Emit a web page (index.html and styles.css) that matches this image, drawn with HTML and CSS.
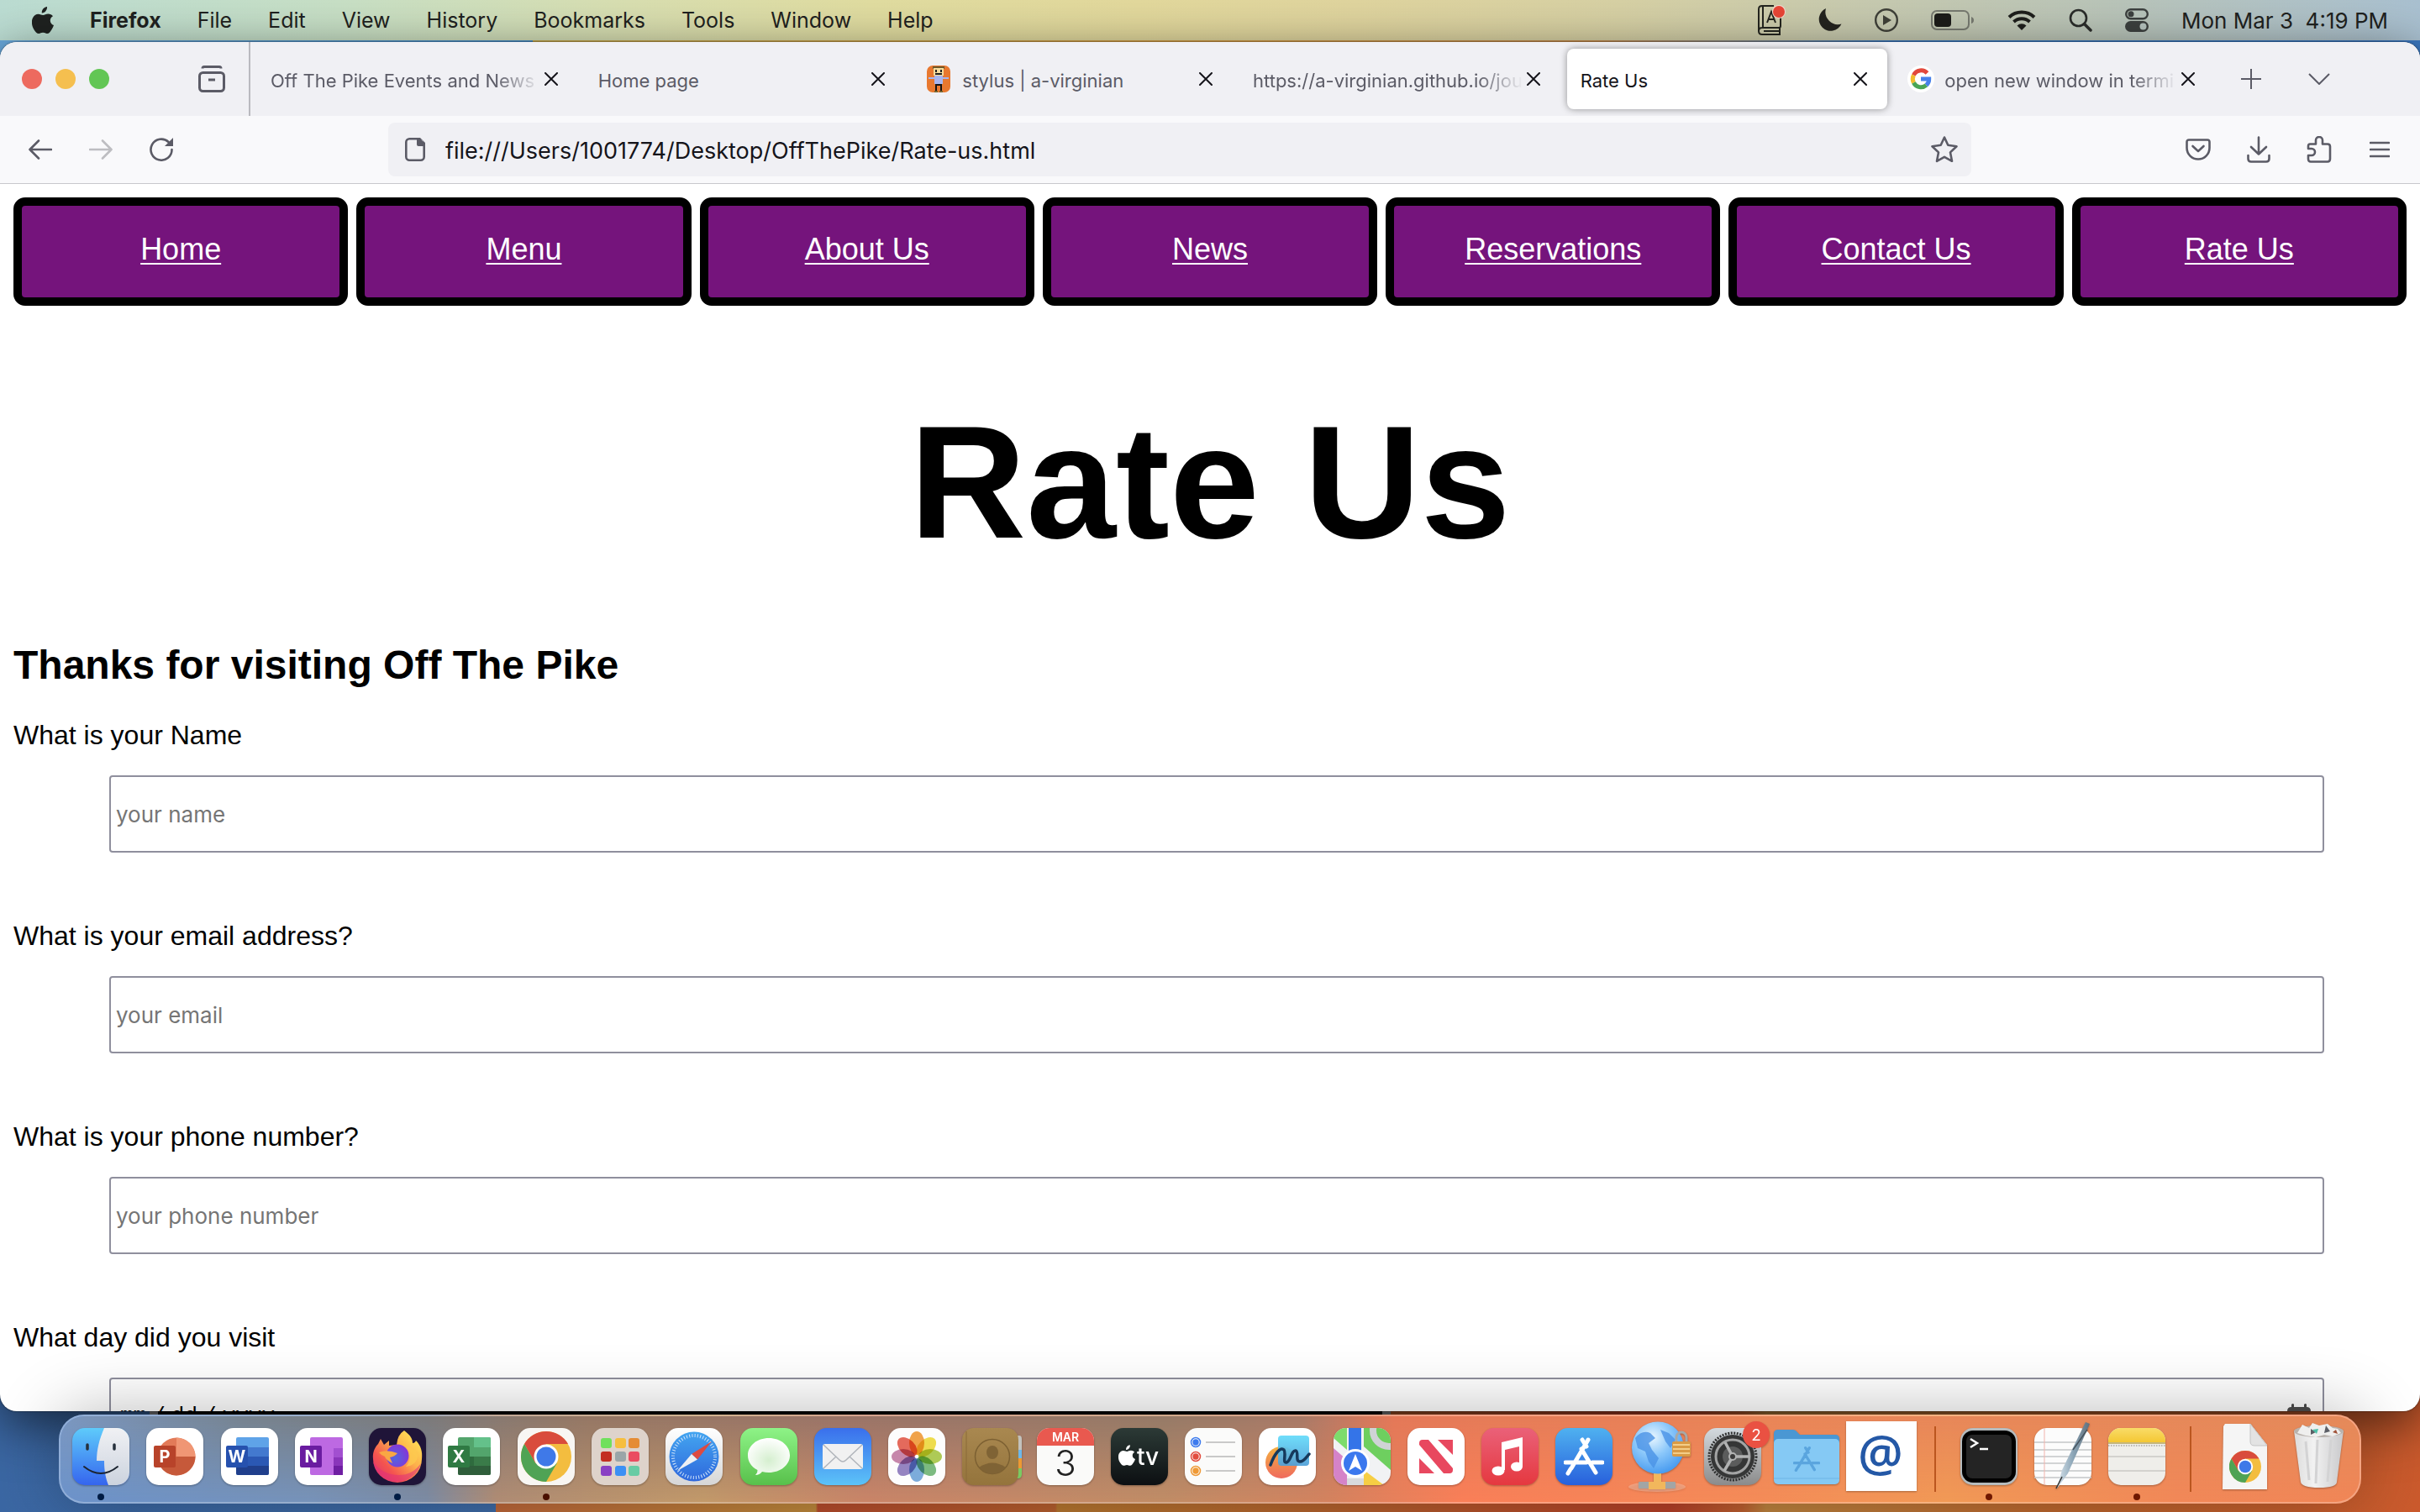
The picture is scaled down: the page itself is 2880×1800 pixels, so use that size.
FILE: index.html
```html
<!DOCTYPE html>
<html lang="en">
<head>
<meta charset="utf-8">
<title>Rate Us</title>
<link rel="stylesheet" href="styles.css">
</head>
<body>
<svg class="defs" aria-hidden="true">
  <defs>
    <linearGradient id="g-blue" x1="0" y1="0" x2="0" y2="1"><stop offset="0" stop-color="#5ecbfb"/><stop offset="1" stop-color="#3565ee"/></linearGradient>
    <linearGradient id="g-face" x1="0" y1="0" x2="0" y2="1"><stop offset="0" stop-color="#f0f1f4"/><stop offset="1" stop-color="#ccd3de"/></linearGradient>
    <linearGradient id="g-green" x1="0" y1="0" x2="0" y2="1"><stop offset="0" stop-color="#8ef387"/><stop offset="1" stop-color="#58c04b"/></linearGradient>
    <linearGradient id="g-mail" x1="0" y1="0" x2="0" y2="1"><stop offset="0" stop-color="#3a6fec"/><stop offset="1" stop-color="#5cc3f8"/></linearGradient>
    <linearGradient id="g-store" x1="0" y1="0" x2="0" y2="1"><stop offset="0" stop-color="#4fb1f0"/><stop offset="1" stop-color="#2860dc"/></linearGradient>
    <linearGradient id="g-white" x1="0" y1="0" x2="0" y2="1"><stop offset="0" stop-color="#ffffff"/><stop offset="1" stop-color="#d6d6d6"/></linearGradient>
    <linearGradient id="g-safari" x1="0" y1="0" x2="0" y2="1"><stop offset="0" stop-color="#43a5f0"/><stop offset="1" stop-color="#2f68dc"/></linearGradient>
    <linearGradient id="g-music" x1="0" y1="0" x2="0" y2="1"><stop offset="0" stop-color="#ea6179"/><stop offset="1" stop-color="#e5383f"/></linearGradient>
    <linearGradient id="g-tv" x1="0" y1="0" x2="0" y2="1"><stop offset="0" stop-color="#2c3a36"/><stop offset="1" stop-color="#0c0f12"/></linearGradient>
    <linearGradient id="g-book" x1="0" y1="0" x2="0" y2="1"><stop offset="0" stop-color="#a98850"/><stop offset="1" stop-color="#94743c"/></linearGradient>
    <linearGradient id="g-free" x1="0" y1="0" x2="0" y2="1"><stop offset="0" stop-color="#f4b13f"/><stop offset="1" stop-color="#ef6a5e"/></linearGradient>
    <linearGradient id="g-freesq" x1="0" y1="0" x2="0" y2="1"><stop offset="0" stop-color="#64dbfa"/><stop offset="1" stop-color="#4f9fd8"/></linearGradient>
    <linearGradient id="g-fox" x1="1" y1="0" x2="0" y2="1"><stop offset="0" stop-color="#fff25a"/><stop offset=".4" stop-color="#fdb04b"/><stop offset=".7" stop-color="#f4544f"/><stop offset="1" stop-color="#d92a78"/></linearGradient>
    <linearGradient id="g-set" x1="0" y1="0" x2="0" y2="1"><stop offset="0" stop-color="#d3dadf"/><stop offset="1" stop-color="#8b8b8b"/></linearGradient>
    <linearGradient id="g-note" x1="0" y1="0" x2="0" y2="1"><stop offset="0" stop-color="#f9dc68"/><stop offset="1" stop-color="#f4c733"/></linearGradient>
    <linearGradient id="g-bin" x1="0" y1="0" x2="1" y2="0"><stop offset="0" stop-color="#dcdcdc"/><stop offset=".4" stop-color="#f2f2f2"/><stop offset="1" stop-color="#c9c9cb"/></linearGradient>
    <linearGradient id="g-pen" x1="0" y1="0" x2="1" y2="0"><stop offset="0" stop-color="#d8e4ec"/><stop offset=".5" stop-color="#8aa4b6"/><stop offset="1" stop-color="#5f6f7c"/></linearGradient>
    <radialGradient id="g-globe" cx=".4" cy=".3" r=".7"><stop offset="0" stop-color="#e8f6ff"/><stop offset=".5" stop-color="#8cc8fa"/><stop offset="1" stop-color="#4b9df0"/></radialGradient>
    <radialGradient id="g-bubble" cx=".5" cy=".6" r=".6"><stop offset="0" stop-color="#d5efcf"/><stop offset="1" stop-color="#ffffff"/></radialGradient>
    <radialGradient id="g-orb" cx=".4" cy=".6" r=".7"><stop offset="0" stop-color="#5266e0"/><stop offset="1" stop-color="#8a2fd6"/></radialGradient>
    <clipPath id="tile"><rect width="68" height="68" rx="15"/></clipPath>
    <symbol id="chrome" viewBox="0 0 60 60">
      <circle cx="30" cy="30" r="30" fill="#f3bd3f"/>
      <path d="M30 0A30 30 0 0 1 56 15H30L17 37.500 4 15A30 30 0 0 1 30 0Z" fill="#d94c3c"/>
      <path d="M4 15A30 30 0 0 0 30 60L43 37.500 30 44 17 37.500Z" fill="#4fa355"/>
      <circle cx="30" cy="30" r="14.500" fill="#fff"/><circle cx="30" cy="30" r="11.500" fill="#3f79e8"/>
    </symbol>
    <symbol id="apple" viewBox="0 0 26 32">
      <path d="M18 0c.3 2-.6 4-1.700 5.300C15.200 6.700 13.500 7.700 11.800 7.500c-.3-1.900.6-3.900 1.700-5.200C14.600 1 16.500.1 18 0ZM25 11.200c-2.200 1.300-3.200 3-3.200 5.200 0 2.600 1.500 4.500 4.200 5.600-.6 1.900-1.500 3.700-2.700 5.500C21.700 30 20.400 32 18 32c-1.900 0-2.600-1.200-4.900-1.200S10 32 8.200 32c-2.300 0-4-2.200-5.600-4.600C-.1 23.300-1 17.500.9 13.400 2.200 10.600 4.900 8.700 7.600 8.700c2.300 0 3.900 1.300 5.700 1.300 1.700 0 3.300-1.400 6.100-1.400 2.200 0 4.300 1 5.600 2.600Z"/>
    </symbol>
    <symbol id="x" viewBox="0 0 16 16"><path d="M1 1 15 15M15 1 1 15" fill="none" stroke="#15141a" stroke-width="2" stroke-linecap="round"/></symbol>
    <symbol id="store" viewBox="0 0 48 48"><path d="M22 4 27 12M29 4 9 38M21 15 38 43M2 31H27M34 31H46M8 39 5 44" fill="none" stroke="currentColor" stroke-width="5" stroke-linecap="round"/></symbol>
  </defs>
</svg>

<header class="menubar">
  <nav class="menus" aria-label="Menu bar">
    <svg class="apple" width="26" height="32"><use href="#apple"/></svg>
    <button class="menu menu-app">Firefox</button>
    <button class="menu">File</button>
    <button class="menu">Edit</button>
    <button class="menu">View</button>
    <button class="menu">History</button>
    <button class="menu">Bookmarks</button>
    <button class="menu">Tools</button>
    <button class="menu">Window</button>
    <button class="menu">Help</button>
  </nav>
  <div class="status">
    <svg width="34" height="36" viewBox="0 0 34 36" fill="none" stroke="#24251f" stroke-width="2"><path d="M28 14V25Q28 27 26 27H6Q2 27 2 31T6 35H28M27 27V35M2 31V5Q2 1 6 1H20M7 1V27M8 31H27"/><path d="M12 21 17 8 22 21M14 17H20"/><circle cx="26" cy="8" r="8" fill="#f4dcd2" stroke="none"/><circle cx="26" cy="8" r="7" fill="#e84536" stroke="none"/></svg>
    <svg width="28" height="28" viewBox="0 0 28 28"><path d="M9 0A14 14 0 1 0 27.500 18.500 15 15 0 0 1 9 0Z" fill="#24241f"/></svg>
    <svg width="28" height="28" viewBox="0 0 28 28"><circle cx="14" cy="14" r="12.800" fill="none" stroke="#3f4038" stroke-width="2.400"/><path d="M10 8 20 14 10 20Z" fill="#3f4038"/></svg>
    <svg width="52" height="26" viewBox="0 0 52 26"><rect x="1" y="2" width="44" height="22" rx="6" fill="none" stroke="#777a70" stroke-width="2"/><rect x="4" y="5" width="20" height="16" rx="4" fill="#1c1c19"/><path d="M48 9Q51 10 51 13T48 17Z" fill="#777a70"/></svg>
    <svg width="34" height="26" viewBox="0 0 34 26" fill="none" stroke="#1e1f1c" stroke-width="4"><path d="M2 9.500A22 22 0 0 1 32 9.500M7.500 15A14 14 0 0 1 26.500 15"/><path d="M17 25 11.500 19.500A8 8 0 0 1 22.500 19.500Z" fill="#1e1f1c" stroke="none"/></svg>
    <svg width="28" height="28" viewBox="0 0 28 28" fill="none" stroke="#2a2c2a" stroke-width="2.600"><circle cx="11.500" cy="11.500" r="9.500"/><path d="M18.500 18.500 26 26" stroke-width="3.500" stroke-linecap="round"/></svg>
    <svg width="28" height="28" viewBox="0 0 28 28"><rect x="1.200" y="1.200" width="25.600" height="11" rx="5.500" fill="none" stroke="#3c403f" stroke-width="2.400"/><circle cx="7" cy="6.700" r="3.500" fill="#3c403f"/><rect y="15" width="28" height="13" rx="6.500" fill="#3c403f"/><circle cx="21.500" cy="21.500" r="4" fill="#b6c4bf"/></svg>
    <time class="clock">Mon Mar 3  4:19 PM</time>
  </div>
</header>

<div class="rear-window"></div>

<main class="window">
  <div class="tabbar">
    <div class="tab-lead">
      <div class="lights"><button class="light red" aria-label="Close"></button><button class="light yellow" aria-label="Minimize"></button><button class="light green" aria-label="Zoom"></button></div>
      <button class="icon-btn" aria-label="View recent browsing"><svg width="32" height="32" viewBox="0 0 32 32" fill="none" stroke="#5b5b66" stroke-width="3"><path d="M5 3.500Q5 1.500 7 1.500H25Q27 1.500 27 3.500"/><rect x="1.500" y="8.500" width="29" height="22" rx="4"/><path d="M12 17H20"/></svg></button>
    </div>
    <div class="tabs">
      <div class="tab"><span class="tab-title faded">Off The Pike Events and News</span><button class="close" aria-label="Close tab"><svg width="16" height="16"><use href="#x"/></svg></button></div>
      <div class="tab"><span class="tab-title">Home page</span><button class="close" aria-label="Close tab"><svg width="16" height="16"><use href="#x"/></svg></button></div>
      <div class="tab">
        <svg class="favicon" width="32" height="32" viewBox="0 0 32 32"><rect x="2" width="28" height="32" rx="7" fill="#e8782f"/><rect x="9" y="1" width="14" height="3" fill="#6e5a2c"/><rect x="10" y="3" width="12" height="9" fill="#f6dc9c"/><path d="M12 5h2v3h-2zM18 5h2v3h-2zM12 9h8v2h-8z" fill="#222"/><path d="M11 12H21V14H28V16H21V22H11V16H4V14H11Z" fill="#a9b6ee"/><path d="M12 22H20V30H18V24H14V30H12Z" fill="#151515"/><path d="M11 30h4v2h-4zM17 30h4v2h-4z" fill="#77652f"/></svg>
        <span class="tab-title">stylus | a-virginian</span><button class="close" aria-label="Close tab"><svg width="16" height="16"><use href="#x"/></svg></button></div>
      <div class="tab"><span class="tab-title faded">https://a-virginian.github.io/jou</span><button class="close" aria-label="Close tab"><svg width="16" height="16"><use href="#x"/></svg></button></div>
      <div class="tab selected"><span class="tab-title">Rate Us</span><button class="close" aria-label="Close tab"><svg width="16" height="16"><use href="#x"/></svg></button></div>
      <div class="tab">
        <svg class="favicon" width="32" height="32" viewBox="0 0 32 32"><circle cx="16" cy="16" r="16" fill="#fff"/><g fill="none" stroke-width="5"><path d="M23.500 9A9.800 9.800 0 0 0 7.400 11.500" stroke="#e2483c"/><path d="M7.400 11.500A9.800 9.800 0 0 0 7.400 20.500" stroke="#f2bc2e"/><path d="M7.400 20.500A9.800 9.800 0 0 0 22.500 23.400" stroke="#4aa556"/><path d="M22.500 23.400A9.800 9.800 0 0 0 25.700 16H16" stroke="#4680ea"/></g></svg>
        <span class="tab-title faded">open new window in termi</span><button class="close" aria-label="Close tab"><svg width="16" height="16"><use href="#x"/></svg></button></div>
    </div>
    <div class="tab-actions">
      <button class="icon-btn" aria-label="New tab"><svg width="24" height="24" viewBox="0 0 24 24" stroke="#5b5b66" stroke-width="2"><path d="M12 0V24M0 12H24"/></svg></button>
      <button class="icon-btn" aria-label="List all tabs"><svg width="26" height="14" viewBox="0 0 26 14" fill="none" stroke="#5b5b66" stroke-width="2"><path d="M1 1 13 13 25 1"/></svg></button>
    </div>
  </div>

  <div class="toolbar">
    <div class="tools-left">
      <button class="icon-btn" aria-label="Back"><svg width="28" height="24" viewBox="0 0 28 24" fill="none" stroke="#5b5b66" stroke-width="2.600" stroke-linecap="round" stroke-linejoin="round"><path d="M12 1.500 1.500 12 12 22.500M1.500 12H27"/></svg></button>
      <button class="icon-btn" aria-label="Forward" disabled><svg width="28" height="24" viewBox="0 0 28 24" fill="none" stroke="#bdbdc1" stroke-width="2.600" stroke-linecap="round" stroke-linejoin="round"><path d="M16 1.500 26.500 12 16 22.500M26.500 12H1"/></svg></button>
      <button class="icon-btn" aria-label="Reload"><svg width="28" height="28" viewBox="0 0 28 28"><path d="M26.500 14A12.500 12.500 0 1 1 22.500 5" fill="none" stroke="#5b5b66" stroke-width="2.600" stroke-linecap="round"/><path d="M28 0V10H18Z" fill="#5b5b66"/></svg></button>
    </div>
    <div class="urlbar">
      <svg width="24" height="28" viewBox="0 0 24 28"><rect x="1.300" y="1.300" width="21.400" height="25.400" rx="4" fill="none" stroke="#5b5b66" stroke-width="2.600"/><path d="M14 0H17L24 7V10H16Q14 10 14 8Z" fill="#5b5b66"/><path d="M18 0H24V6Z" fill="#f0f0f4"/></svg>
      <input class="url" type="text" aria-label="Address" value="file:///Users/1001774/Desktop/OffThePike/Rate-us.html">
      <button class="icon-btn star" aria-label="Bookmark this page"><svg width="32" height="32" viewBox="0 0 32 32" fill="none" stroke="#5b5b66" stroke-width="2.600" stroke-linejoin="round"><path d="M16 1.500 20.300 10.700 30.500 12.200 23 19.400 25 29.800 16 24.800 7 29.800 9 19.400 1.500 12.200 11.700 10.700Z"/></svg></button>
    </div>
    <div class="tools-right">
      <button class="icon-btn" aria-label="Save to Pocket"><svg width="30" height="26" viewBox="0 0 30 26" fill="none" stroke="#5b5b66" stroke-width="2.600" stroke-linecap="round" stroke-linejoin="round"><path d="M4 1.500H26Q28.500 1.500 28.500 4V11A13.500 13.500 0 0 1 1.500 11V4Q1.500 1.500 4 1.500Z"/><path d="M8.500 9 15 15 21.500 9"/></svg></button>
      <button class="icon-btn" aria-label="Downloads"><svg width="28" height="32" viewBox="0 0 28 32" fill="none" stroke="#5b5b66" stroke-width="2.600" stroke-linecap="round" stroke-linejoin="round"><path d="M14 1.500V21M5 13 14 21.500 23 13M1.500 23V27Q1.500 30.500 5 30.500H23Q26.500 30.500 26.500 27V23"/></svg></button>
      <button class="icon-btn" aria-label="Extensions"><svg width="30" height="32" viewBox="0 0 30 32" fill="none" stroke="#5b5b66" stroke-width="2.600" stroke-linejoin="round"><path d="M4 9.500H11V5A4 4 0 0 1 19 5V9.500H25Q28 9.500 28 12.500V27Q28 30.500 25 30.500H5Q2 30.500 2 27V23H6A4 4 0 0 0 6 15H2V12Q2 9.500 4 9.500Z"/></svg></button>
      <button class="icon-btn" aria-label="Open menu"><svg width="24" height="20" viewBox="0 0 24 20" stroke="#5b5b66" stroke-width="2.600" stroke-linecap="round"><path d="M1 2H23M1 10H23M1 18H23"/></svg></button>
    </div>
  </div>

  <div class="page">
    <nav class="site-nav">
      <a href="#">Home</a>
      <a href="#">Menu</a>
      <a href="#">About Us</a>
      <a href="#">News</a>
      <a href="#">Reservations</a>
      <a href="#">Contact Us</a>
      <a href="#">Rate Us</a>
    </nav>
    <h1>Rate Us</h1>
    <form>
      <h2>Thanks for visiting Off The Pike</h2>
      <label for="name">What is your Name</label>
      <input class="field" id="name" type="text" placeholder="your name">
      <label for="email">What is your email address?</label>
      <input class="field" id="email" type="email" placeholder="your email">
      <label for="phone">What is your phone number?</label>
      <input class="field" id="phone" type="tel" placeholder="your phone number">
      <label for="day">What day did you visit</label>
      <input class="field" id="day" type="date">
    </form>
  </div>
</main>

<footer class="dock">
  <div class="slot running"><svg class="app" viewBox="0 0 68 68"><g clip-path="url(#tile)"><rect width="68" height="68" fill="url(#g-blue)"/><path d="M38 0C32 14 29 26 29 39H38C38 52 40 60 43 68H68V0Z" fill="url(#g-face)"/></g><path d="M18 20V25M50 20V25" stroke="#26303c" stroke-width="3.500" stroke-linecap="round"/><path d="M14 46Q34 62 54 46" fill="none" stroke="#1c2430" stroke-width="2" stroke-linecap="round"/></svg></div>
  <div class="slot"><svg class="app" viewBox="0 0 68 68"><rect width="68" height="68" rx="15" fill="#fff"/><circle cx="36" cy="34" r="22.500" fill="#e27a58"/><path d="M36 11.500A22.500 22.500 0 0 1 58.500 34H36Z" fill="#f09674"/><path d="M58.500 34A22.500 22.500 0 0 1 15 42L36 34Z" fill="#c6593a"/><rect x="9" y="21" width="26" height="26" rx="2" fill="#b8432a"/><text x="22" y="41" class="office">P</text></svg></div>
  <div class="slot"><svg class="app" viewBox="0 0 68 68"><rect width="68" height="68" rx="15" fill="#fff"/><rect x="18" y="11" width="39" height="45" rx="2" fill="#5fa3e8"/><path d="M18 23H57V34H18Z" fill="#4379cf"/><path d="M18 34H57V45H18Z" fill="#2b58b4"/><path d="M18 45H57V54Q57 56 55 56H20Q18 56 18 54Z" fill="#203f8c"/><rect x="6" y="21" width="26" height="26" rx="2" fill="#2651ae"/><text x="19" y="41" class="office">W</text></svg></div>
  <div class="slot"><svg class="app" viewBox="0 0 68 68"><rect width="68" height="68" rx="15" fill="#fff"/><rect x="18" y="11" width="39" height="45" rx="2" fill="#bd69e2"/><path d="M46 24H57V35H46Z" fill="#a24fd0"/><path d="M46 35H57V45H46Z" fill="#8a35ba"/><path d="M46 45H57V56H46Z" fill="#6f1ea2"/><rect x="6" y="21" width="26" height="26" rx="2" fill="#6a1ca0"/><text x="19" y="41" class="office">N</text></svg></div>
  <div class="slot running"><svg class="app" viewBox="0 0 68 68"><rect width="68" height="68" rx="15" fill="#1f1438"/><path d="M42 3C50 9 52 13 52 18Q55 18 56 15C62 21 64 28 63 37A29 28 0 0 1 5 37C4 28 8 22 11 19L14 13 18 20 24 15 24 21 33 20Q34 8 42 3Z" fill="url(#g-fox)"/><path d="M5 40A29 28 0 0 0 62 42Q52 56 36 56 16 56 5 40Z" fill="#e0307a" opacity=".55"/><circle cx="34" cy="33" r="13.500" fill="url(#g-orb)"/><path d="M12 29Q22 25 34 30Q31 34 25 35L28 42Q20 38 19 34Q15 33 12 29Z" fill="#f9a743"/><path d="M44 22Q54 34 44 46Q58 44 58 32 56 24 44 22Z" fill="#fdc94f" opacity=".8"/></svg></div>
  <div class="slot"><svg class="app" viewBox="0 0 68 68"><rect width="68" height="68" rx="15" fill="#fff"/><rect x="18" y="11" width="39" height="45" rx="2" fill="#53a56c"/><path d="M37 11H55Q57 11 57 13V23H37Z" fill="#64c18a"/><path d="M37 34H57V45H37Z" fill="#3a7b49"/><path d="M18 34H37V45H18Z" fill="#2f6b3e"/><path d="M18 45H57V54Q57 56 55 56H20Q18 56 18 54Z" fill="#2f5e3b"/><rect x="6" y="21" width="26" height="26" rx="2" fill="#2f7a43"/><text x="19" y="41" class="office">X</text></svg></div>
  <div class="slot running warm"><svg class="app" viewBox="0 0 68 68"><rect width="68" height="68" rx="15" fill="#f8f6f3"/><use href="#chrome" x="4" y="4" width="60" height="60"/></svg></div>
  <div class="slot"><svg class="app" viewBox="0 0 68 68"><rect width="68" height="68" rx="15" fill="#ded3cb"/><g><rect x="11" y="12" width="13" height="12" rx="3" fill="#70e05c"/><rect x="28" y="12" width="13" height="12" rx="3" fill="#f6be3e"/><rect x="44" y="12" width="13" height="12" rx="3" fill="#e58c34"/><rect x="11" y="28" width="13" height="12" rx="3" fill="#c32e22"/><rect x="28" y="28" width="13" height="12" rx="3" fill="#9aa5a8"/><rect x="44" y="28" width="13" height="12" rx="3" fill="#ea4c60"/><rect x="11" y="45" width="13" height="12" rx="3" fill="#8a40c4"/><rect x="28" y="45" width="13" height="12" rx="3" fill="#3c90f4"/><rect x="44" y="45" width="13" height="12" rx="3" fill="#68cba4"/></g></svg></div>
  <div class="slot"><svg class="app" viewBox="0 0 68 68"><rect width="68" height="68" rx="15" fill="url(#g-white)"/><circle cx="34" cy="34" r="29.500" fill="url(#g-safari)"/><circle cx="34" cy="34" r="25" fill="none" stroke="#cfe4fa" stroke-width="4" stroke-dasharray="1 2.270"/><path d="M55 16 38 37.500 31 31Z" fill="#dd4a42"/><path d="M14 51 31 31 38 37.500Z" fill="#eef0f3"/></svg></div>
  <div class="slot"><svg class="app" viewBox="0 0 68 68"><rect width="68" height="68" rx="15" fill="url(#g-green)"/><path d="M34 12C48 12 59 21 59 32.500S48 53 34 53Q30 53 26 52Q23 56 18 56Q21 53 20.500 50C13 46 9 40 9 32.500 9 21 20 12 34 12Z" fill="url(#g-bubble)"/></svg></div>
  <div class="slot"><svg class="app" viewBox="0 0 68 68"><rect width="68" height="68" rx="15" fill="url(#g-mail)"/><rect x="10" y="19" width="48" height="30" rx="3" fill="#f1f1f1"/><path d="M11 48 26 34M57 48 42 34M11 20 30 38Q34 42 38 38L57 20" fill="none" stroke="#b1b5bb" stroke-width="1.500"/></svg></div>
  <div class="slot"><svg class="app" viewBox="0 0 68 68"><rect width="68" height="68" rx="15" fill="#fdfdfd"/><g class="petals"><ellipse cx="34" cy="18" rx="9" ry="14" fill="#f19a37"/><ellipse cx="34" cy="18" rx="9" ry="14" fill="#efdb3c" transform="rotate(45 34 34)"/><ellipse cx="34" cy="18" rx="9" ry="14" fill="#a8c745" transform="rotate(90 34 34)"/><ellipse cx="34" cy="18" rx="9" ry="14" fill="#6fb573" transform="rotate(135 34 34)"/><ellipse cx="34" cy="18" rx="9" ry="14" fill="#6fa5da" transform="rotate(180 34 34)"/><ellipse cx="34" cy="18" rx="9" ry="14" fill="#8b78bd" transform="rotate(225 34 34)"/><ellipse cx="34" cy="18" rx="9" ry="14" fill="#c27ba4" transform="rotate(270 34 34)"/><ellipse cx="34" cy="18" rx="9" ry="14" fill="#e45b4b" transform="rotate(315 34 34)"/></g></svg></div>
  <div class="slot"><svg class="app" viewBox="0 0 68 68"><path d="M60 9H68Q71 9 71 13V26H60Z" fill="#c3c2bd"/><path d="M60 26H71V36H60Z" fill="#6db8ea"/><path d="M60 36H71V48H60Z" fill="#ee9932"/><path d="M60 48H71V55Q71 60 66 60H60Z" fill="#7acb62"/><rect width="67" height="68" rx="14" fill="url(#g-book)"/><path d="M5 4V64" stroke="#8a6b38"/><circle cx="36" cy="34" r="20.500" fill="none" stroke="#7c6032" stroke-width="1.500"/><ellipse cx="36" cy="29" rx="7" ry="8" fill="#7f6335"/><path d="M20 47Q36 36 52 47Q36 62 20 47Z" fill="#7f6335"/></svg></div>
  <div class="slot"><svg class="app" viewBox="0 0 68 68"><g clip-path="url(#tile)"><rect width="68" height="68" fill="#fafaf9"/><rect width="68" height="21" fill="#e9594f"/></g><text x="34" y="16" class="cal-month">MAR</text><text x="34" y="57" class="cal-day">3</text></svg></div>
  <div class="slot"><svg class="app" viewBox="0 0 68 68"><rect width="68" height="68" rx="15" fill="url(#g-tv)"/><use href="#apple" x="9" y="20" width="20" height="25" fill="#fff"/><text x="44" y="44" class="tv">tv</text></svg></div>
  <div class="slot"><svg class="app" viewBox="0 0 68 68"><rect width="68" height="68" rx="15" fill="#fbfbfa"/><path d="M25 17H60M25 34H60M25 51H60" stroke="#b9b9b9" stroke-width="1.500"/><g fill="none" stroke-width="1.500"><circle cx="13" cy="17" r="5.500" stroke="#3d7bee"/><circle cx="13" cy="34" r="5.500" stroke="#e24d3f"/><circle cx="13" cy="51" r="5.500" stroke="#ef9a37"/></g><circle cx="13" cy="17" r="3.700" fill="#3d7bee"/><circle cx="13" cy="34" r="3.700" fill="#e24d3f"/><circle cx="13" cy="51" r="3.700" fill="#ef9a37"/></svg></div>
  <div class="slot"><svg class="app" viewBox="0 0 68 68"><rect width="68" height="68" rx="15" fill="#fff"/><circle cx="27" cy="41" r="19" fill="url(#g-free)"/><rect x="23" y="9" width="37" height="36" rx="4" fill="url(#g-freesq)" opacity=".93"/><path d="M14 44C19 30 26 22 30 26 33 30 28 42 33 41 38 40 39 26 44 27 48 28 43 40 49 40 54 40 57 34 60 31" fill="none" stroke="#16395c" stroke-width="3.500" stroke-linecap="round"/></svg></div>
  <div class="slot"><svg class="app" viewBox="0 0 68 68"><g clip-path="url(#tile)"><rect width="68" height="68" fill="#f1f2f4"/><path d="M0 0H16V26L0 12Z" fill="#7ddc6b"/><path d="M0 24 16 38V68H0Z" fill="#d583c8"/><path d="M36 0H68V50L36 22Z" fill="#6ecf5f"/><circle cx="66" cy="3" r="19" fill="none" stroke="#cfd3d6" stroke-width="8"/><path d="M36 50 60 68H36Z" fill="#f6ce44"/><path d="M16 60H36V68H16Z" fill="#d8dadd"/><rect x="18" width="15" height="32" fill="#3474e8"/></g><circle cx="26" cy="42" r="17" fill="#fff"/><circle cx="26" cy="42" r="14" fill="#3b78ee"/><path d="M26 31 34 51 26 46 18 51Z" fill="#fff"/></svg></div>
  <div class="slot"><svg class="app" viewBox="0 0 68 68"><rect width="68" height="68" rx="15" fill="#fff"/><path d="M14 18Q14 14 18 14H25L54 48V50Q54 54 50 54H43L14 20Z" fill="#e8485f"/><path d="M36 14H54V32ZM14 36V54H32Z" fill="#e8485f"/></svg></div>
  <div class="slot"><svg class="app" viewBox="0 0 68 68"><rect width="68" height="68" rx="15" fill="url(#g-music)"/><path d="M24 17 49 11V46H45V22L28 26V50H24Z" fill="#fff"/><ellipse cx="20" cy="51" rx="7.500" ry="5.500" fill="#fff"/><ellipse cx="42" cy="46" rx="7" ry="5.500" fill="#fff"/></svg></div>
  <div class="slot"><svg class="app" viewBox="0 0 68 68"><rect width="68" height="68" rx="15" fill="url(#g-store)"/><use href="#store" x="10" y="10" width="48" height="48" color="#fff"/></svg></div>
  <div class="slot"><svg class="app" viewBox="0 0 68 68"><ellipse cx="32" cy="70" rx="34" ry="6" fill="#ffd9c8" opacity=".35"/><rect x="10" y="64" width="44" height="8" rx="1" fill="#a2a5a5"/><path d="M28 54H37V64H42V73H22V64H28Z" fill="#f2b75c"/><circle cx="33" cy="23.500" r="31" fill="url(#g-globe)"/><path d="M6 12Q14 2 24 6L30 12 22 18 26 26 34 36 28 48 22 40 18 28 9 24ZM36 2 46 6 54 14 48 24 42 16Z" fill="#4a92e6" opacity=".8"/><path d="M55 17V11A6 6 0 0 1 67 11V17" fill="none" stroke="#a8a8a6" stroke-width="3"/><rect x="50" y="16" width="22" height="18" rx="2" fill="#d99a45"/><path d="M51 20H71M51 25H71M51 30H71" stroke="#f3cd88" stroke-width="2"/></svg></div>
  <div class="slot"><svg class="app" viewBox="0 0 68 68"><rect width="68" height="68" rx="15" fill="url(#g-set)"/><circle cx="34" cy="34" r="28" fill="none" stroke="#2f3030" stroke-width="3" stroke-dasharray="2 1.500"/><circle cx="34" cy="34" r="26" fill="#353636"/><circle cx="34" cy="34" r="20" fill="none" stroke="#a3a4a4" stroke-width="3"/><circle cx="34" cy="34" r="12" fill="#5b5c5c"/><path d="M34 34 25 17M34 34H54M34 34 24 51" stroke="#b2b3b3" stroke-width="3.500"/><circle cx="34" cy="34" r="4" fill="#3a3a3a" stroke="#b2b3b3" stroke-width="2"/><circle cx="62" cy="8" r="16" fill="#ea5142"/><text x="62" y="15" class="badge">2</text></svg></div>
  <div class="slot"><svg class="app" viewBox="0 0 68 68"><path d="M-5 7Q-5 2 0 2H18Q21 2 23 5L26 8H68Q73 8 73 13V30H-5Z" fill="#4a97d3"/><rect x="-5" y="13" width="78" height="54" rx="5" fill="#85c9f4"/><path d="M-5 60H73" stroke="#6fb6e6"/><use href="#store" x="18" y="21" width="32" height="32" color="#5aa5de"/></svg></div>
  <div class="slot"><svg class="app" viewBox="0 0 68 68"><rect x="-8" y="-8" width="84" height="83" fill="#fff"/><text x="33" y="52" class="at">@</text></svg></div>
  <div class="sep"></div>
  <div class="slot running hot"><svg class="app" viewBox="0 0 68 68"><rect width="68" height="68" rx="15" fill="#b5bbbd"/><rect x="2" y="3" width="64" height="62" rx="13" fill="#000"/><rect x="7" y="8" width="54" height="52" rx="7" fill="#242424"/><path d="M12 13 20 18 12 23" fill="none" stroke="#fff" stroke-width="2.500"/><path d="M23 25H33" stroke="#fff" stroke-width="2.500"/></svg></div>
  <div class="slot"><svg class="app" viewBox="0 0 68 68"><rect width="68" height="68" rx="15" fill="#fcfcfc"/><path d="M0 17H68M0 26H68M0 34H68M0 42H68M0 51H68M0 59H68" stroke="#c4c6c8" stroke-width="1.500"/><path d="M12 0V68" stroke="#f2b4ac"/><path d="M61-7 66-5 40 54 27 72 33 50Z" fill="url(#g-pen)"/><path d="M63 2 46 26" stroke="#47545f" stroke-width="1.500"/><path d="M33 58 26 72" stroke="#333" stroke-width="1.500"/></svg></div>
  <div class="slot running hot"><svg class="app" viewBox="0 0 68 68"><g clip-path="url(#tile)"><rect width="68" height="68" fill="#efeeea"/><rect width="68" height="17" fill="url(#g-note)"/><path d="M0 18H68" stroke="#c5b67b" stroke-width="2"/><path d="M0 21H68" stroke="#b8b8b4" stroke-width="2" stroke-dasharray="1.500 1.500"/><path d="M0 34H68M0 51H68" stroke="#d3d2ce" stroke-width="2"/></g></svg></div>
  <div class="sep"></div>
  <div class="slot"><svg class="app" viewBox="0 0 68 68"><path d="M8-2 10-5H40L60 20V73H7Z" fill="#f5f5f5"/><path d="M40-5V16Q40 21 45 21H60Z" fill="#e3e3e3" stroke="#c4c4c4"/><use href="#chrome" x="15" y="27" width="38" height="38"/></svg></div>
  <div class="slot"><svg class="app" viewBox="0 0 68 68"><path d="M4 3 12 64Q13 71 34 71T55 64L63 3Z" fill="url(#g-bin)"/><ellipse cx="33.500" cy="4" rx="29.500" ry="7" fill="#b9b3ae"/><path d="M8 6 14-4 22 0 26-6 34-3 44-5 50 0 56 1 60 6 50 10 40 8 30 11 18 9Z" fill="#efefee"/><path d="M24 1 30 5 24 8ZM42-3 47 4 40 6Z" fill="#5c5f66"/><path d="M26 2 33 1 31 7Z" fill="#4cc0a8"/><path d="M50 5 54 2 56 7Z" fill="#a05238"/><path d="M18 16 22 62M48 14 44 64M32 14 30 66" stroke="#d3d3d4" stroke-width="3" fill="none"/></svg></div>
</footer>
</body>
</html>
```
FILE: styles.css
```css
* {
  box-sizing: border-box;
}

body {
  margin: 0;
  height: 100vh;
  display: flex;
  flex-direction: column;
  overflow: hidden;
  position: relative;
  font-family: "Liberation Sans", Arial, sans-serif;
  color: #000;
  background:
    linear-gradient(90deg, #6aa9dc 0, #4d93cc 22%, #c9ac50 22%, #d8a048 50%, #c98f50 66%, #3f7ec4 78%, #3c78c0 100%) top / 100% 140px no-repeat,
    linear-gradient(90deg, #3b67a3 0, #3e6ca8 20.5%, #c0683a 20.5%, #c08a3c 33.700%, #b84c2c 33.800%, #b9602f 43.600%, #b97830 43.700%, #b8642e 55%, #b84028 69%, #c06030 72%, #c0853f 73%, #c0682e 85%, #cb5a2d 100%);
}

button {
  border: 0;
  padding: 0;
  background: none;
  font: inherit;
  color: inherit;
}

svg {
  display: block;
  flex: none;
}

.defs {
  position: absolute;
  width: 0;
  height: 0;
}

/* System menu bar */
.menubar {
  height: 48px;
  flex: none;
  display: flex;
  align-items: center;
  justify-content: space-between;
  padding: 0 38px;
  font-family: Inter, sans-serif;
  font-size: 25px;
  color: #1f2220;
  background: linear-gradient(90deg, #bbdcd2 0, #c7dfc5 14%, #d8deb0 26%, #e0dca0 36%, #e2d89c 47%, #dfd49e 56%, #d6d0a4 67%, #c8caae 76%, #b9c4b8 87%, #a9c0d0 100%);
}

.menus {
  display: flex;
  align-items: center;
  gap: 43px;
}

.apple {
  fill: #1f2220;
}

.menu-app {
  font-weight: 700;
}

.status {
  display: flex;
  align-items: center;
  gap: 39px;
}

.clock {
  white-space: pre;
  font-size: 26px;
}

/* Window that peeks out behind the browser */
.rear-window {
  position: absolute;
  left: 178px;
  right: 1225px;
  bottom: 100px;
  height: 60px;
  background: #000;
  border: solid #8e8e8e;
  border-width: 0 10px;
}

/* Browser window */
.window {
  flex: 1;
  min-height: 0;
  margin-top: 2px;
  overflow: hidden;
  position: relative;
  border-radius: 20px;
  background: #fff;
  box-shadow: 0 0 2px rgba(0, 0, 0, .7), 0 16px 60px rgba(0, 0, 0, .6);
}

.tabbar {
  height: 88px;
  display: flex;
  background: #f0f0f4;
  font-family: Inter, sans-serif;
  font-size: 22px;
}

.tab-lead {
  width: 298px;
  flex: none;
  display: flex;
  align-items: center;
  justify-content: space-between;
  padding: 0 24px 0 26px;
  border-right: 2px solid #b9b9bf;
}

.lights {
  display: flex;
  gap: 16px;
}

.light {
  width: 24px;
  height: 24px;
  border-radius: 50%;
}

.red { background: #ed6a5f; }
.yellow { background: #f5bf4f; }
.green { background: #62c655; }

.icon-btn {
  width: 40px;
  height: 40px;
  flex: none;
  display: flex;
  align-items: center;
  justify-content: center;
}

.tabs {
  flex: 1;
  min-width: 0;
  display: flex;
  gap: 8px;
  padding: 8px 4px 8px 8px;
}

.tab {
  flex: 1 1 0;
  min-width: 0;
  display: flex;
  align-items: center;
  padding: 0 24px 0 16px;
  border-radius: 8px;
  color: #5b5b66;
}

.tab.selected {
  background: #fff;
  color: #15141a;
  box-shadow: 0 0 8px rgba(0, 0, 0, .4);
}

.favicon {
  margin-right: 12px;
}

.tab-title {
  flex: 1;
  min-width: 0;
  overflow: hidden;
  white-space: nowrap;
  line-height: 32px;
  margin-top: 3px;
}

.tab-title.faded {
  mask-image: linear-gradient(90deg, #000 calc(100% - 60px), transparent calc(100% - 4px));
}

.tab-actions {
  flex: none;
  display: flex;
  align-items: center;
  gap: 41px;
  padding: 0 100px 0 19px;
}

.toolbar {
  height: 81px;
  display: flex;
  align-items: center;
  background: #f9f9fb;
  border-bottom: 1px solid #c8c8cc;
}

.tools-left,
.tools-right {
  flex: none;
  display: flex;
  gap: 32px;
  padding: 0 28px;
}

.tools-left {
  width: 462px;
}

.tools-right {
  width: 534px;
  justify-content: flex-end;
}

.urlbar {
  flex: 1;
  height: 64px;
  display: flex;
  align-items: center;
  gap: 24px;
  padding: 0 12px 0 20px;
  border-radius: 8px;
  background: #f0f0f4;
}

.url {
  flex: 1;
  min-width: 0;
  border: 0;
  padding: 2px 0 0;
  outline: 0;
  background: none;
  font: 27px Inter, sans-serif;
  color: #15141a;
}

/* Web page */
.page {
  padding: 16px;
}

.site-nav {
  display: grid;
  grid-template-columns: repeat(7, 1fr);
  gap: 10px;
}

.site-nav a {
  padding: 32px 0 37px;
  border: 10px solid #000;
  border-radius: 14px;
  background: #75147c;
  color: #fff;
  font-size: 36px;
  line-height: 40px;
  text-align: center;
  text-underline-offset: 4px;
  text-decoration-thickness: 2px;
}

h1 {
  margin: 100px 0 80px;
  font-size: 192px;
  line-height: 220px;
  text-align: center;
}

h2 {
  margin: 0 0 37px;
  font-size: 48px;
  line-height: 56px;
}

label {
  display: block;
  font-size: 32px;
  line-height: 36px;
}

.field {
  display: block;
  width: calc(100% - 212px);
  height: 92px;
  margin: 30px 0 81px 114px;
  padding: 0 6px;
  border: 2px solid #8f8f9d;
  border-radius: 4px;
  background: #fff;
  font: 26px Inter, sans-serif;
  color: #000;
}

.field::placeholder {
  color: #757575;
}

.field[type="date"] {
  padding-left: 10px;
  padding-right: 14px;
  font-family: "Liberation Mono", monospace;
}

.field::-webkit-datetime-edit-text {
  padding: 0 6px;
}

.field::-webkit-calendar-picker-indicator {
  width: 28px;
  height: 30px;
  padding: 0;
  background: url("data:image/svg+xml,%3Csvg xmlns='http://www.w3.org/2000/svg' viewBox='0 0 28 30'%3E%3Cpath d='M5 4V1Q7-1 8 1V4H20V1Q22-1 23 1V4Q28 4 28 9V30H0V9Q0 4 5 4Z' fill='%234d4d4d'/%3E%3C/svg%3E") center / 100% 100% no-repeat;
}

/* Dock */
.dock {
  position: relative;
  flex: none;
  height: 106px;
  margin: 4px 70px 10px;
  padding: 0 4px;
  display: flex;
  border: 2px solid rgba(255, 255, 255, .25);
  border-radius: 30px;
  background: linear-gradient(90deg, #6c93cb 0, #7793ba 11%, #7c8ba4 16%, #b08c74 19%, #c39a6a 28%, #ca8568 35%, #c28d66 48%, #d4835f 55%, #fa7f58 61%, #f58c58 74%, #f29a56 82%, #f28858 92%, #f18657 100%) border-box;
  box-shadow: 0 0 80px rgba(0, 0, 0, .3);
}

.dock::before {
  content: "";
  position: absolute;
  inset: 0;
  border-radius: 28px;
  background: linear-gradient(90deg, #7b97c0 0, #77838f 8%, #7c7a7a 16%, #957764 23%, #9a7468 34%, #957a68 48%, #a87a68 54%, #e47858 58%, #e88558 75%, #e48a5a 100%);
  mask-image: linear-gradient(#000, transparent);
}

.slot {
  position: relative;
  flex: 1 1 0;
  padding-top: 14px;
  display: flex;
  flex-direction: column;
  align-items: center;
  gap: 10px;
}

.running::after {
  content: "";
  width: 8px;
  height: 8px;
  border-radius: 50%;
  background: #001c44;
}

.running.warm::after { background: #4a1000; }
.running.hot::after { background: #701800; }

.app {
  width: 68px;
  height: 68px;
  overflow: visible;
  filter: drop-shadow(0 1px 1px rgba(0, 0, 0, .3));
}

.petals ellipse {
  mix-blend-mode: multiply;
  opacity: .9;
}

.app text {
  font-family: Inter, sans-serif;
  text-anchor: middle;
}

.app .office {
  font-size: 20px;
  font-weight: 700;
  fill: #fff;
}

.app .cal-month {
  font-size: 14px;
  font-weight: 600;
  fill: #fff;
}

.app .cal-day {
  font-size: 42px;
  font-weight: 300;
  fill: #222;
}

.app .tv {
  font-size: 28px;
  font-weight: 500;
  fill: #fff;
}

.app .badge {
  font-size: 19px;
  fill: #fff;
}

.app .at {
  font-family: "Open Sans", sans-serif;
  font-size: 60px;
  font-weight: 600;
  fill: #2458a6;
}

.sep {
  position: relative;
  flex: none;
  width: 40px;
  padding: 12px 19px;
}

.sep::before {
  content: "";
  display: block;
  width: 2px;
  height: 78px;
  background: #bb561f;
}
```
